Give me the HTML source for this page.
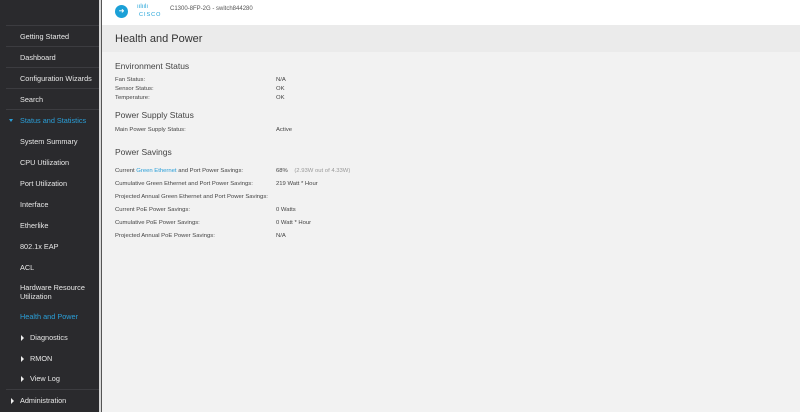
<!DOCTYPE html>
<html><head><meta charset="utf-8"><style>
*{margin:0;padding:0;box-sizing:border-box}
body{width:800px;height:412px;overflow:hidden;background:#f2f2f2;font-family:"Liberation Sans",sans-serif;position:relative}
#sb{position:absolute;left:0;top:0;width:99px;height:412px;background:#2a2a2d}
#sb2{position:absolute;left:99px;top:0;width:2px;height:412px;background:#d8d8d8}
#sb3{position:absolute;left:101px;top:0;width:1px;height:412px;background:#555}
.it{position:absolute;left:20px;font-size:7.3px;color:#e8e8e8;white-space:nowrap}
.sep{position:absolute;left:6px;width:93px;height:1px;background:#3c3c40}
.tri{position:absolute;width:0;height:0;border-top:3px solid transparent;border-bottom:3px solid transparent;border-left:3.5px solid #eee}
#hdr{position:absolute;left:102px;top:0;width:698px;height:25px;background:#fff}
#title{position:absolute;left:102px;top:25px;width:698px;height:27px;background:#ebebeb;font-size:11px;color:#333;padding:8px 0 0 13px}
.h{position:absolute;left:115px;font-size:8.5px;color:#444}
.l{position:absolute;left:115px;font-size:5.9px;color:#444;white-space:nowrap}
.v{position:absolute;left:276px;font-size:5.9px;color:#444;white-space:nowrap}
</style></head><body>
<div id="sb"></div><div id="sb2"></div><div id="sb3"></div>
<div class="sep" style="top:25px"></div>
<div class="it" style="top:32px">Getting Started</div>
<div class="sep" style="top:46px"></div>
<div class="it" style="top:53px">Dashboard</div>
<div class="sep" style="top:67px"></div>
<div class="it" style="top:74px">Configuration Wizards</div>
<div class="sep" style="top:88px"></div>
<div class="it" style="top:95px">Search</div>
<div class="sep" style="top:109px"></div>
<div style="position:absolute;left:9px;top:119px;border-left:2.5px solid transparent;border-right:2.5px solid transparent;border-top:3px solid #2a9fd8"></div>
<div class="it" style="top:116px;color:#2a9fd8">Status and Statistics</div>
<div class="it" style="top:137px">System Summary</div>
<div class="it" style="top:158px">CPU Utilization</div>
<div class="it" style="top:179px">Port Utilization</div>
<div class="it" style="top:200px">Interface</div>
<div class="it" style="top:221px">Etherlike</div>
<div class="it" style="top:242px">802.1x EAP</div>
<div class="it" style="top:263px">ACL</div>
<div class="it" style="top:283px;line-height:9px">Hardware Resource<br>Utilization</div>
<div class="it" style="top:312px;color:#2a9fd8">Health and Power</div>
<div class="tri" style="left:21px;top:335px"></div><div class="it" style="left:30px;top:333px">Diagnostics</div>
<div class="tri" style="left:21px;top:356px"></div><div class="it" style="left:30px;top:354px">RMON</div>
<div class="tri" style="left:21px;top:376px"></div><div class="it" style="left:30px;top:374px">View Log</div>
<div class="sep" style="top:389px"></div>
<div class="tri" style="left:11px;top:398px"></div><div class="it" style="top:396px">Administration</div>
<div id="hdr">
<div style="position:absolute;left:13px;top:5px;width:13px;height:13px;border-radius:50%;background:#1ba0d7;color:#fff;font-size:7px;text-align:center;line-height:13px">&#10140;</div>
<div style="position:absolute;left:35px;top:4px;font-size:6px;color:#1ba0d7">ıılıılı</div>
<div style="position:absolute;left:37px;top:12px;font-size:5.5px;color:#1ba0d7;letter-spacing:1px">CISCO</div>
<div style="position:absolute;left:68px;top:6px;font-size:6px;color:#555">C1300-8FP-2G - switch844280</div>
</div>
<div id="title">Health and Power</div>
<div class="h" style="top:61px">Environment Status</div>
<div class="l" style="top:77px">Fan Status:</div><div class="v" style="top:77px">N/A</div>
<div class="l" style="top:86px">Sensor Status:</div><div class="v" style="top:86px">OK</div>
<div class="l" style="top:95px">Temperature:</div><div class="v" style="top:95px">OK</div>
<div class="h" style="top:110px">Power Supply Status</div>
<div class="l" style="top:127px">Main Power Supply Status:</div><div class="v" style="top:127px">Active</div>
<div class="h" style="top:147px">Power Savings</div>
<div class="l" style="top:168px">Current <span style="color:#2a9fd8">Green Ethernet</span> and Port Power Savings:</div><div class="v" style="top:168px">68% &nbsp;&nbsp; <span style="color:#999">(2.93W out of 4.33W)</span></div>
<div class="l" style="top:181px">Cumulative Green Ethernet and Port Power Savings:</div><div class="v" style="top:181px">219 Watt * Hour</div>
<div class="l" style="top:194px">Projected Annual Green Ethernet and Port Power Savings:</div>
<div class="l" style="top:207px">Current PoE Power Savings:</div><div class="v" style="top:207px">0 Watts</div>
<div class="l" style="top:220px">Cumulative PoE Power Savings:</div><div class="v" style="top:220px">0 Watt * Hour</div>
<div class="l" style="top:233px">Projected Annual PoE Power Savings:</div><div class="v" style="top:233px">N/A</div>
</body></html>
